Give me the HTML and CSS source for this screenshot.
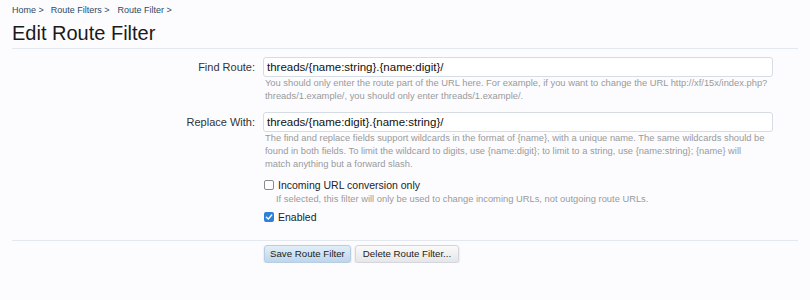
FILE: index.html
```html
<!DOCTYPE html>
<html>
<head>
<meta charset="utf-8">
<link rel="stylesheet" href="styles.css">
</head>
<body>
<div class="page">
  <nav class="crumbs">
    <a class="crumb">Home &gt;</a>
    <a class="crumb">Route Filters &gt;</a>
    <a class="crumb">Route Filter &gt;</a>
  </nav>
  <h1 class="title">Edit Route Filter</h1>
  <form class="form">
    <div class="row">
      <label class="label">Find Route:</label>
      <div class="ctrl">
        <div class="input">threads/{name:string}.{name:digit}/</div>
        <p class="hint">You should only enter the route part of the URL here. For example, if you want to change the URL http://xf/15x/index.php?<br>threads/1.example/, you should only enter threads/1.example/.</p>
      </div>
    </div>
    <div class="row">
      <label class="label">Replace With:</label>
      <div class="ctrl">
        <div class="input">threads/{name:digit}.{name:string}/</div>
        <p class="hint">The find and replace fields support wildcards in the format of {name}, with a unique name. The same wildcards should be<br>found in both fields. To limit the wildcard to digits, use {name:digit}; to limit to a string, use {name:string}; {name} will<br>match anything but a forward slash.</p>
      </div>
    </div>
    <div class="row">
      <div class="label"></div>
      <div class="ctrl checks">
        <div class="check"><span class="box"></span><span>Incoming URL conversion only</span></div>
        <p class="hint sub">If selected, this filter will only be used to change incoming URLs, not outgoing route URLs.</p>
        <div class="check"><span class="box on"><svg viewBox="0 0 10 10" width="10" height="10"><path d="M2.4 5.3 L4.3 7.1 L7.7 3" fill="none" stroke="#fff" stroke-width="1.4" stroke-linecap="round" stroke-linejoin="round"/></svg></span><span>Enabled</span></div>
      </div>
    </div>
    <div class="submit">
      <div class="label"></div>
      <div class="buttons">
        <span class="btn primary">Save Route Filter</span>
        <span class="btn wide">Delete Route Filter...</span>
      </div>
    </div>
  </form>
</div>
</body>
</html>
```

FILE: styles.css
```css
html, body {
  margin: 0;
  padding: 0;
  background: #fcfcff;
}
body {
  font-family: "Liberation Sans", Arial, sans-serif;
  color: #222;
}
.page {
  padding: 0 12px;
}
.crumbs {
  display: flex;
  gap: 7px;
  padding-top: 4px;
  font-size: 9px;
  line-height: 12px;
  color: #2b4a66;
}
.crumb {
  color: #2b4a66;
}
.crumb + .crumb + .crumb {
  margin-left: 1px;
}
.title {
  margin: 5px 0 0;
  font-size: 20px;
  font-weight: normal;
  line-height: 24px;
  color: #1a1a1a;
  padding-bottom: 3px;
  border-bottom: 1px solid #e3e8ef;
}
.form {
  padding-top: 8px;
}
.row, .submit {
  display: grid;
  grid-template-columns: 243px 510px;
  column-gap: 8px;
}
.label {
  text-align: right;
  font-size: 11px;
  line-height: 20px;
  color: #333;
}
.input {
  box-sizing: border-box;
  height: 20px;
  border: 1px solid #d6dce4;
  border-radius: 3px;
  background: #fff;
  font-size: 11.5px;
  line-height: 18px;
  padding: 0 3px;
  color: #111;
}
.hint {
  margin: 0 0 9px 2px;
  font-size: 9.35px;
  line-height: 13px;
  color: #9a9a9a;
}
.check {
  display: flex;
  align-items: center;
  gap: 4px;
  font-size: 10.5px;
  line-height: 16px;
  color: #222;
}
.box {
  box-sizing: border-box;
  width: 10px;
  height: 10px;
  border: 1px solid #8a8a8a;
  border-radius: 2px;
  background: #fff;
  margin-left: 1px;
  display: flex;
}
.box.on {
  border: none;
  background: #2f7fd6;
}
.checks {
  padding-top: 6px;
}
.row:nth-child(2) .hint {
  margin-bottom: 0;
}
.hint.sub {
  margin: 0 0 3px 13px;
}
.submit {
  margin-top: 15px;
  border-top: 1px solid #e3e8ef;
  padding-top: 4px;
}
.buttons {
  display: flex;
  gap: 4px;
  padding-left: 1px;
}
.btn {
  display: inline-block;
  font-size: 9.7px;
  line-height: 16px;
  padding: 0 5px;
  border-radius: 3px;
  background: linear-gradient(#fafafa, #e6e6e9);
  border: 1px solid #d3d6dc;
  box-shadow: 0 1px 2px rgba(0,0,0,0.18);
  color: #222;
}
.btn.wide {
  padding: 0 7px;
}
.btn.primary {
  background: linear-gradient(#e2eef8, #bcd6ec);
  border-color: #b7cde1;
}
```
